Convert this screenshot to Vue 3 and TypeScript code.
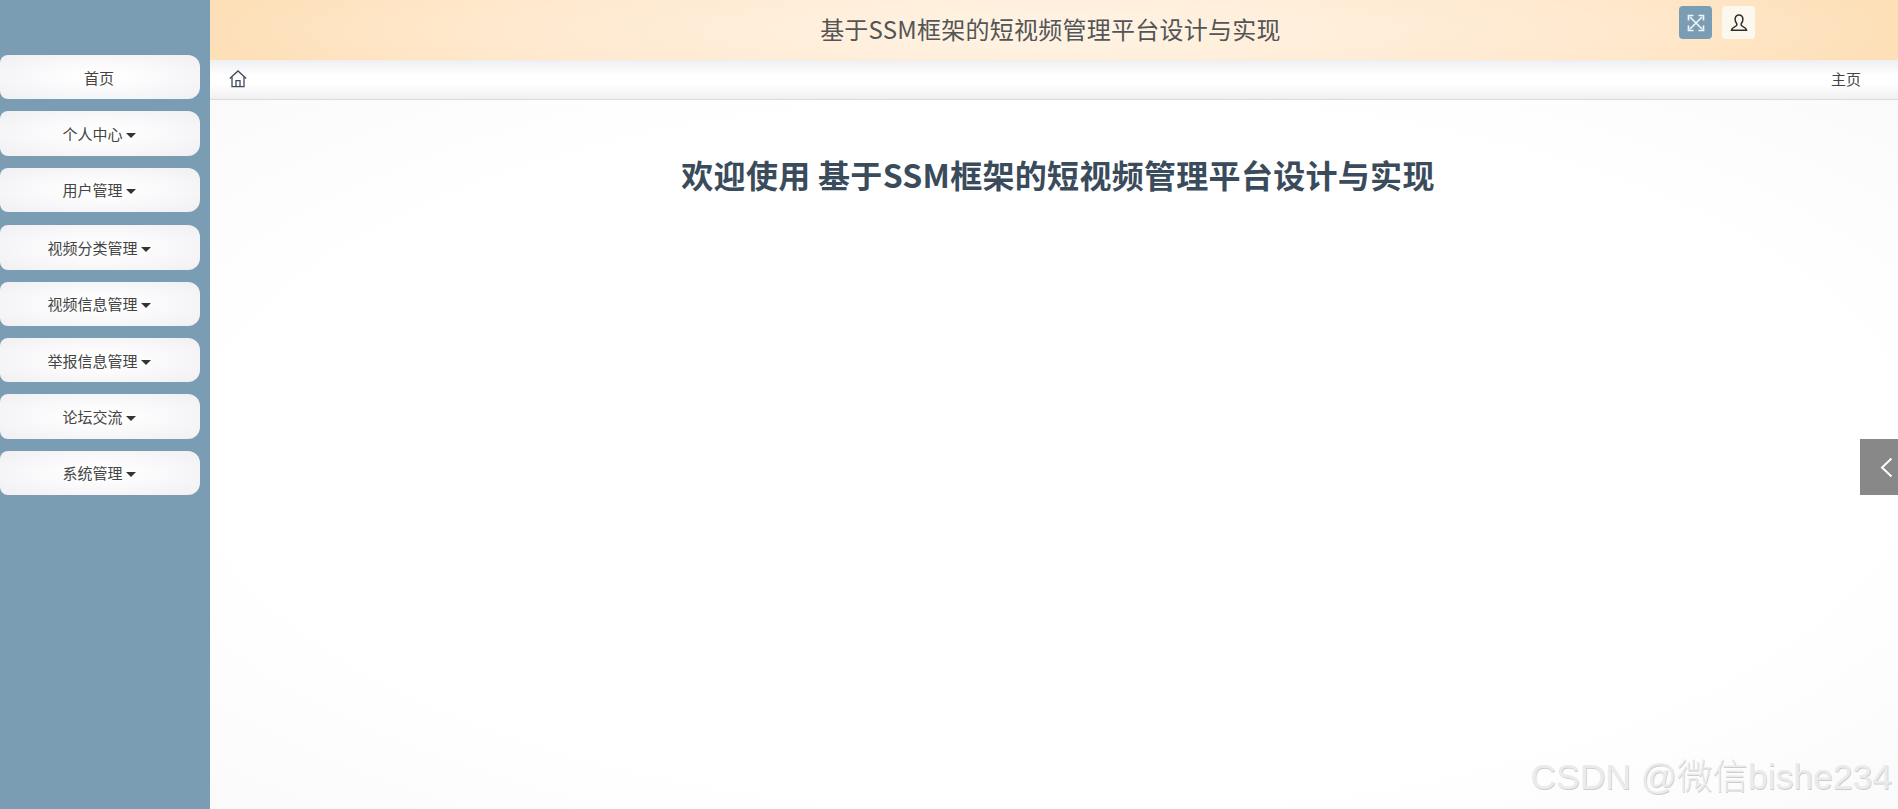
<script setup lang="ts">
import { ref } from "vue";

interface MenuItem {
  label: string;
  caret: boolean;
}

const title = ref("基于SSM框架的短视频管理平台设计与实现");

const menu = ref<MenuItem[]>([
  { label: "首页", caret: false },
  { label: "个人中心", caret: true },
  { label: "用户管理", caret: true },
  { label: "视频分类管理", caret: true },
  { label: "视频信息管理", caret: true },
  { label: "举报信息管理", caret: true },
  { label: "论坛交流", caret: true },
  { label: "系统管理", caret: true },
]);
</script>

<template>
  <div class="page">
    <aside class="sidebar">
      <nav class="menu">
        <button v-for="item in menu" :key="item.label" class="menu-btn" type="button">
          {{ item.label }}<i v-if="item.caret" class="caret"></i>
        </button>
      </nav>
    </aside>
    <div class="content">
      <header class="topbar">
        <div class="topbar-title">{{ title }}</div>
        <div class="actions">
          <button class="icon-btn primary" type="button" aria-label="全屏">
            <svg width="18" height="18" viewBox="0 0 18 18" fill="none" stroke="#eef4f8" stroke-width="1.7">
              <path d="M3 3l12 12M15 3L3 15" />
              <path d="M1.5 6.5V1.5h5M11.5 1.5h5v5M16.5 11.5v5h-5M6.5 16.5h-5v-5" />
            </svg>
          </button>
          <button class="icon-btn" type="button" aria-label="用户">
            <svg width="20" height="20" viewBox="0 0 20 20" fill="none" stroke="#2f2f33" stroke-width="1.5">
              <path d="M10 2c-2.5 0-3.9 1.9-3.9 4.2 0 2 .8 3.6 1.7 4.6v1.5c0 1-4.6 1.7-5.3 4.900h15c-.7-3.200-5.300-3.900-5.300-4.900v-1.500c.9-1 1.700-2.600 1.700-4.600C13.900 3.900 12.500 2 10 2z" />
            </svg>
          </button>
        </div>
      </header>
      <div class="crumbs">
        <svg class="home" width="20" height="20" viewBox="0 0 20 20" fill="none" stroke="#3f4a5c" stroke-width="1.3">
          <path d="M1.800 9.600L10 2l8.200 7.600" />
          <path d="M4 8v9.600h12V8" />
          <path d="M8 17.600v-6h4v6" />
        </svg>
        <span class="crumb-text">主页</span>
      </div>
      <main class="main">
        <h1 class="welcome">欢迎使用 {{ title }}</h1>
      </main>
    </div>
    <div class="side-toggle">
      <svg width="13" height="21" viewBox="0 0 13 21" fill="none" stroke="#fff" stroke-width="2">
        <path d="M11.500 1.500L2 10.500l9.500 9" />
      </svg>
    </div>
    <div class="watermark">CSDN @微信bishe234</div>
  </div>
</template>

<style>
html,
body {
  margin: 0;
  overflow: hidden;
}
</style>

<style scoped>
.page {
  position: relative;
  display: flex;
  height: 809px;
  overflow: hidden;
  font-family: "Noto Sans CJK SC", "Liberation Sans", sans-serif;
  color: #444;
}

.sidebar {
  flex: none;
  width: 210px;
  background: #7a9db3;
}

.menu {
  display: flex;
  flex-direction: column;
  gap: 12px;
  padding: 55px 10px 0 0;
}

.menu-btn {
  height: 44.4px;
  padding: 0 2px 0 0;
  border: 0;
  border-radius: 8px 12px 12px 8px;
  background: radial-gradient(ellipse at center, #ffffff 10%, #f8f8fa 55%, #f0f0f2 100%);
  font: inherit;
  font-size: 15px;
  color: #444;
}

.menu-btn:nth-child(4) {
  margin-top: 1px;
}

.caret {
  display: inline-block;
  margin-left: 3px;
  vertical-align: 2px;
  border-top: 5px solid #333;
  border-left: 5px solid transparent;
  border-right: 5px solid transparent;
}

.content {
  flex: 1;
  display: flex;
  flex-direction: column;
  min-width: 0;
}

.topbar {
  flex: none;
  display: grid;
  grid-template-columns: 1fr auto 1fr;
  height: 60px;
  padding-right: 7px;
  background: radial-gradient(ellipse 50% 160% at 50% 50%, #fff4e6 0%, #ffe9cf 65%, #fde0b8 100%);
}

.topbar-title {
  grid-column: 2;
  font-size: 24px;
  letter-spacing: 0.25px;
  line-height: 58px;
  color: #555;
}

.actions {
  grid-column: 3;
  justify-self: end;
  display: flex;
  gap: 10px;
  margin: 6px 136px 0 0;
}

.icon-btn {
  display: flex;
  align-items: center;
  justify-content: center;
  width: 33px;
  height: 33px;
  padding: 0;
  border: 0;
  border-radius: 4px;
  background: #fdf8ee;
}

.icon-btn.primary {
  background: #7a9db3;
}

.crumbs {
  flex: none;
  display: flex;
  align-items: center;
  justify-content: space-between;
  height: 40px;
  padding: 0 37px 0 18px;
  box-sizing: border-box;
  border-bottom: 1px solid #dcdcde;
  background: linear-gradient(#efeff2, #ffffff 40%, #ffffff 60%, #f0f0f2);
}

.home {
  margin-top: -2px;
}

.crumb-text {
  font-size: 15px;
  margin-top: -2px;
  color: #444;
}

.main {
  flex: 1;
  padding-top: 50px;
  background: radial-gradient(ellipse at center, #ffffff 70%, #fafafb 100%);
}

.welcome {
  margin: 0;
  padding-left: 8px;
  font-size: 32px;
  letter-spacing: 0.3px;
  line-height: 48px;
  font-weight: 700;
  text-align: center;
  color: #3a4b5c;
}

.side-toggle {
  position: absolute;
  top: 439px;
  right: 0;
  display: flex;
  align-items: center;
  justify-content: flex-end;
  width: 38px;
  height: 56px;
  padding-right: 5px;
  box-sizing: border-box;
  background: #888;
}

.watermark {
  position: absolute;
  right: 6px;
  bottom: 11px;
  font-family: "Liberation Sans", "Noto Sans CJK SC", sans-serif;
  font-size: 35.500px;
  font-weight: 300;
  line-height: 42px;
  color: #ebebeb;
  text-shadow: 0.7px 0.7px 0 #cdcdcd;
  white-space: nowrap;
}
</style>
